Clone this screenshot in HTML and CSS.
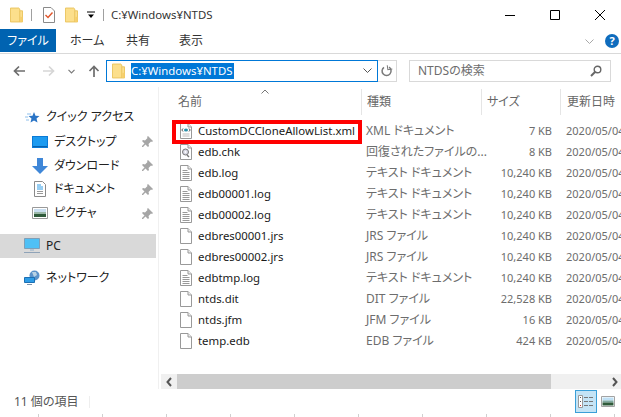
FILE: index.html
```html
<!DOCTYPE html>
<html lang="ja">
<head>
<meta charset="utf-8">
<title>NTDS</title>
<link rel="stylesheet" href="styles.css">
</head>
<body>
<svg class="defs" width="0" height="0">
  <symbol id="folder" viewBox="0 0 14 16"><path d="M.5.500h9l1 1v2h3v12H.5z" fill="#fcdf8c" stroke="#e9c35b"/><path d="M10.500 3.500v12" stroke="#e9c35b"/><path d="M11 10h2.500v5.500H11z" fill="#f6cf6c"/></symbol>
  <symbol id="doc" viewBox="0 0 12 16"><path d="M.5.500h7.500l3.500 3.500v11.500H.5z" fill="#fff" stroke="#999"/><path d="M8 .5v3.500h3.500" fill="#eee" stroke="#999"/></symbol>
  <symbol id="log" viewBox="0 0 12 16"><path d="M.5.500h7.500l3.500 3.500v11.500H.5z" fill="#fff" stroke="#999"/><path d="M8 .5v3.500h3.500" fill="#eee" stroke="#999"/><path d="M2.500 5.500h5M2.500 7.500h7M2.500 9.500h7M2.500 11.500h7M2.500 13.500h7" stroke="#999"/></symbol>
  <symbol id="xml" viewBox="0 0 12 16"><path d="M.5.500h7.500l3.500 3.500v11.500H.5z" fill="#fff" stroke="#999"/><path d="M8 .5v3.500h3.500" fill="#eee" stroke="#999"/><ellipse cx="6" cy="7" rx="2" ry="1.500" fill="#2a8fa8"/><path d="M3 5.500 1.800 7 3 8.500M9 5.500 10.200 7 9 8.500" fill="none" stroke="#555"/><path d="M2.500 11h7M2.500 13h7" stroke="#bbb"/></symbol>
  <symbol id="chk" viewBox="0 0 12 16"><path d="M.5.500h7.500l3.500 3.500v11.500H.5z" fill="#fff" stroke="#999"/><path d="M8 .5v3.500h3.500" fill="#eee" stroke="#999"/><circle cx="5.500" cy="8" r="3" fill="#d8d8e4" stroke="#777"/><circle cx="5.500" cy="8" r="1" fill="#fff"/><path d="m7 11 2 2" stroke="#777" stroke-width="1.500"/></symbol>
  <symbol id="pin" viewBox="0 0 11 11"><path d="m6 0 5 5-1 1-1-.5-2.500 2.500.5 2-1 1-2.500-2.500L1 11l-1 0 0-1 2.500-2.500L0 5l1-1 2 .5L5.500 2 5 1z" fill="#a6a6a6"/></symbol>
</svg>

<header class="titlebar">
  <svg class="ti ti-folder"><use href="#folder"/></svg>
  <span class="vsep"></span>
  <svg class="ti-props" viewBox="0 0 12 16"><path d="M.5.500h7.500l3.500 3.500v11.500H.5z" fill="#fff" stroke="#8a8a8a"/><path d="m2.500 8 2.500 2.500 4.500-5" fill="none" stroke="#e0552b" stroke-width="1.400"/></svg>
  <svg class="ti ti-folder2"><use href="#folder"/></svg>
  <svg class="ti-down" viewBox="0 0 8 8"><path d="M0 1h8" stroke="#000"/><path d="M1 3.500h6L4 7z" fill="#000"/></svg>
  <span class="vsep vsep2"></span>
  <span class="title latin">C:¥Windows¥NTDS</span>
  <div class="winctl">
    <svg viewBox="0 0 10 10"><path d="M0 5.500h10" stroke="#000"/></svg>
    <svg viewBox="0 0 10 10"><path d="M.5.500h9v9h-9z" fill="none" stroke="#000"/></svg>
    <svg viewBox="0 0 10 10"><path d="m0 0 10 10M10 0 0 10" stroke="#000"/></svg>
  </div>
</header>

<nav class="tabs">
  <span class="tab tab-file">ファイル</span>
  <span class="tab tab-home">ホーム</span>
  <span class="tab tab-share">共有</span>
  <span class="tab tab-view">表示</span>
  <svg class="ribbon-chev" viewBox="0 0 9 6"><path d="m.5.500 4 4 4-4" fill="none" stroke="#a8a8a8"/></svg>
  <span class="help">?</span>
</nav>

<div class="addressrow">
  <div class="navbtns">
    <svg class="nb nb-back" viewBox="0 0 12 12"><path d="M12 6H2M6 1.500 1.500 6 6 10.500" fill="none" stroke="#6d6d6d" stroke-width="1.700"/></svg>
    <svg class="nb nb-fwd" viewBox="0 0 12 12"><path d="M0 6h10M6 1.500 10.500 6 6 10.500" fill="none" stroke="#d6d6d6" stroke-width="1.700"/></svg>
    <svg class="nb-drop" viewBox="0 0 7 5"><path d="m.5.800 3 3 3-3" fill="none" stroke="#7a7a7a" stroke-width="1.200"/></svg>
    <svg class="nb nb-up" viewBox="0 0 12 12"><path d="M6 12V2M1.500 6 6 1.500 10.500 6" fill="none" stroke="#6d6d6d" stroke-width="1.700"/></svg>
  </div>
  <div class="address">
    <svg class="addr-folder"><use href="#folder"/></svg>
    <span class="addr-text"><span class="selected latin">C:¥Windows¥NTDS</span></span>
    <svg class="addr-drop" viewBox="0 0 9 6"><path d="m.5.500 4 4 4-4" fill="none" stroke="#555"/></svg>
  </div>
  <div class="refresh">
    <svg viewBox="0 0 12 12"><path d="M8 2.200A4.500 4.500 0 1 1 3 2.300" fill="none" stroke="#7a7a7a" stroke-width="1.500"/><path d="M6.500 0v4.500H11" fill="none" stroke="#7a7a7a" stroke-width="1" transform="rotate(-8 8 2)"/></svg>
  </div>
  <div class="search">
    <span class="search-text">NTDSの検索</span>
    <svg viewBox="0 0 12 12"><circle cx="7.500" cy="4.500" r="3.300" fill="none" stroke="#666" stroke-width="1.400"/><path d="M5 7 1 11" stroke="#666" stroke-width="2"/></svg>
  </div>
</div>

<main class="body">
  <aside class="sidebar">
    <div class="nav-item nav-quick">
      <svg class="nav-ic" viewBox="0 0 16 16"><path d="m10 3 1.500 3.700 4 .3-3 2.600 1 3.900-3.500-2.100-3.500 2.100 1-3.900-3-2.600 4-.3z" fill="#2a74c6"/><path d="M3 5h4M1 8h3M2 11h3" stroke="#8fc0ec"/></svg>
      <span>クイック アクセス</span>
    </div>
    <div class="nav-item nav-sub">
      <svg class="nav-ic" viewBox="0 0 16 12"><path d="M0 0h16v12H0z" fill="#0a7ad6"/><path d="M1 1h14v9H1z" fill="#1d9bf0"/><path d="M1 10h14v1H1z" fill="#0a62ad"/></svg>
      <span>デスクトップ</span><svg class="pin"><use href="#pin"/></svg>
    </div>
    <div class="nav-item nav-sub">
      <svg class="nav-ic" viewBox="0 0 16 16"><path d="M5 0h6v8h5l-8 8-8-8h5z" fill="#3f87d8"/></svg>
      <span>ダウンロード</span><svg class="pin"><use href="#pin"/></svg>
    </div>
    <div class="nav-item nav-sub">
      <svg class="nav-ic" viewBox="0 0 16 16"><path d="M2.500.500h8l3 3v12h-11z" fill="#fff" stroke="#8a8a8a"/><path d="M5 4h4M5 6h6M5 8h6" stroke="#2e9ce6"/><path d="M5 10.500h6M5 12.500h6" stroke="#999"/></svg>
      <span>ドキュメント</span><svg class="pin"><use href="#pin"/></svg>
    </div>
    <div class="nav-item nav-sub">
      <svg class="nav-ic" viewBox="0 0 16 12"><path d="M.5.500h15v11H.5z" fill="#fff" stroke="#999"/><path d="M2 2h12v3H2z" fill="#c9def0"/><path d="M2 5h12v2H2z" fill="#9bb8a8"/><path d="M2 7h12v3H2z" fill="#2f5a3a"/></svg>
      <span>ピクチャ</span><svg class="pin"><use href="#pin"/></svg>
    </div>
    <div class="nav-item nav-pc">
      <svg class="nav-ic" viewBox="0 0 16 16"><path d="M.5.500h15v10H.5z" fill="#4fc0f5" stroke="#7e9fb8"/><path d="M6 11h4v2H6z" fill="#b5c4d2"/><path d="M0 14h16v1H0z" fill="#8fa3b8"/></svg>
      <span>PC</span>
    </div>
    <div class="nav-item nav-network">
      <svg class="nav-ic" viewBox="0 0 16 16"><circle cx="10.500" cy="5.500" r="5" fill="#5c92c9"/><path d="M8 2h4l1 3-3 2z" fill="#b9d2e4"/><path d="M.5 7.500h10v5H.5z" fill="#2e9ce6" stroke="#1c6fb3"/><path d="M3 14h5v1H3z" fill="#7e93ab"/></svg>
      <span>ネットワーク</span>
    </div>
  </aside>

  <section class="content">
    <div class="list">
      <div class="sort-caret"><svg viewBox="0 0 8 5"><path d="m.5 4.500 3.500-3.500 3.500 3.500" fill="none" stroke="#777"/></svg></div>
      <div class="row head">
        <span class="c-name">名前</span><span class="c-type">種類</span><span class="c-size">サイズ</span><span class="c-date">更新日時</span>
      </div>
      <div class="row"><svg class="fi"><use href="#xml"/></svg><span class="c-name">CustomDCCloneAllowList.xml</span><span class="c-type">XML ドキュメント</span><span class="c-size">7 KB</span><span class="c-date">2020/05/04</span></div>
      <div class="row"><svg class="fi"><use href="#chk"/></svg><span class="c-name">edb.chk</span><span class="c-type">回復されたファイルの...</span><span class="c-size">8 KB</span><span class="c-date">2020/05/04</span></div>
      <div class="row"><svg class="fi"><use href="#log"/></svg><span class="c-name">edb.log</span><span class="c-type">テキスト ドキュメント</span><span class="c-size">10,240 KB</span><span class="c-date">2020/05/04</span></div>
      <div class="row"><svg class="fi"><use href="#log"/></svg><span class="c-name">edb00001.log</span><span class="c-type">テキスト ドキュメント</span><span class="c-size">10,240 KB</span><span class="c-date">2020/05/04</span></div>
      <div class="row"><svg class="fi"><use href="#log"/></svg><span class="c-name">edb00002.log</span><span class="c-type">テキスト ドキュメント</span><span class="c-size">10,240 KB</span><span class="c-date">2020/05/04</span></div>
      <div class="row"><svg class="fi"><use href="#doc"/></svg><span class="c-name">edbres00001.jrs</span><span class="c-type">JRS ファイル</span><span class="c-size">10,240 KB</span><span class="c-date">2020/05/04</span></div>
      <div class="row"><svg class="fi"><use href="#doc"/></svg><span class="c-name">edbres00002.jrs</span><span class="c-type">JRS ファイル</span><span class="c-size">10,240 KB</span><span class="c-date">2020/05/04</span></div>
      <div class="row"><svg class="fi"><use href="#log"/></svg><span class="c-name">edbtmp.log</span><span class="c-type">テキスト ドキュメント</span><span class="c-size">10,240 KB</span><span class="c-date">2020/05/04</span></div>
      <div class="row"><svg class="fi"><use href="#doc"/></svg><span class="c-name">ntds.dit</span><span class="c-type">DIT ファイル</span><span class="c-size">22,528 KB</span><span class="c-date">2020/05/04</span></div>
      <div class="row"><svg class="fi"><use href="#doc"/></svg><span class="c-name">ntds.jfm</span><span class="c-type">JFM ファイル</span><span class="c-size">16 KB</span><span class="c-date">2020/05/04</span></div>
      <div class="row"><svg class="fi"><use href="#doc"/></svg><span class="c-name">temp.edb</span><span class="c-type">EDB ファイル</span><span class="c-size">424 KB</span><span class="c-date">2020/05/04</span></div>
      <div class="callout"></div>
    </div>
    <div class="hscroll">
      <svg class="sb-arrow" viewBox="0 0 6 10"><path d="M5 1 1.500 5 5 9" fill="none" stroke="#555" stroke-width="2"/></svg>
      <div class="sb-track"><div class="sb-thumb"></div></div>
      <svg class="sb-arrow" viewBox="0 0 6 10"><path d="M1 1l3.500 4L1 9" fill="none" stroke="#555" stroke-width="2"/></svg>
    </div>
  </section>
</main>

<footer class="status">
  <span class="count">11 個の項目</span>
  <div class="views">
    <span class="view-btn active"><svg viewBox="0 0 16 13"><path d="M.5.500h4v12h-4z" fill="#fff" stroke="#9a9a9a"/><path d="M2 2h1v1H2zM2 6h1v1H2z" fill="#555"/><path d="M2 10h1v1H2z" fill="#c33"/><path d="M6 2.500h4M11 2.500h4M6 6.500h4M11 6.500h4M6 10.500h4M11 10.500h4" stroke="#777"/></svg></span>
    <span class="view-btn"><svg viewBox="0 0 14 11"><path d="M.5.500h13v10H.5z" fill="#fff" stroke="#a3a3a3"/><path d="M1.500 1.500h11v3h-11z" fill="#bfe0f5"/><path d="M1.500 4.500h11v2h-11z" fill="#7fa9a0"/><path d="M1.500 6.500h11v3h-11z" fill="#2f5a3a"/></svg></span>
  </div>
</footer>
<div class="ruler">
  <i></i><i></i><i></i><i></i><i></i><i></i><i></i><i></i><i></i><i></i>
</div>
</body>
</html>
```
FILE: styles.css
```css
* { box-sizing: border-box; }
html, body { margin: 0; padding: 0; }
body {
  width: 621px;
  height: 417px;
  overflow: hidden;
  background: #fff;
  color: #1a1a1a;
  font: 12px/16px "Noto Sans", "Noto Sans CJK JP", sans-serif;
  font-feature-settings: "palt";
  display: flex;
  flex-direction: column;
}
.defs { position: absolute; }
.latin { font-size: 11.4px; }

.titlebar { height: 29px; display: flex; align-items: center; padding-left: 10px; flex: none; }
.ti { width: 13px; height: 16px; flex: none; }
.ti-folder2 { margin-left: 10px; }
.vsep { width: 1px; height: 12px; background: #a0a0a0; margin-left: 8px; }
.vsep2 { margin-left: 8px; }
.ti-props { width: 12px; height: 16px; margin-left: 11px; }
.ti-down { width: 8px; height: 8px; margin-left: 9px; }
.title { margin-left: 7px; color: #333; }
.winctl { margin-left: auto; display: flex; gap: 35px; padding-right: 16px; }
.winctl svg { width: 10px; height: 10px; display: block; }

.tabs { height: 25px; flex: none; display: flex; align-items: flex-start; border-bottom: 1px solid #d9d9d9; gap: 0; }
.tab { height: 23px; line-height: 23px; color: #333; }
.tab-file { width: 56px; background: #0063b1; color: #fff; text-align: center; }
.tab-home { margin-left: 14px; width: 56px; }
.tab-share { width: 53px; }
.tab-view { width: 30px; }
.ribbon-chev { width: 9px; height: 6px; margin-left: auto; margin-top: 10px; }
.help { width: 14px; height: 14px; border-radius: 50%; background: #0f6cbd; color: #fff; font-weight: 700; font-size: 11px; line-height: 14px; text-align: center; margin: 5px 2px 0 11px; }

.addressrow { height: 33px; flex: none; display: flex; align-items: center; padding-top: 1px; }
.navbtns { width: 106px; display: flex; align-items: center; padding-left: 13px; }
.nb { width: 12px; height: 12px; }
.nb-fwd { margin-left: 18px; }
.nb-drop { width: 7px; height: 5px; margin-left: 13px; }
.nb-up { margin-left: 13px; }
.address { width: 272px; height: 22px; border: 1px solid #0078d7; display: flex; align-items: center; padding-left: 5px; }
.addr-folder { width: 13px; height: 16px; flex: none; }
.addr-text { margin-left: 6px; flex: 1; }
.selected { background: #0078d7; color: #fff; display: inline-block; line-height: 16px; padding-right: 1px; vertical-align: top; }
.addr-drop { width: 9px; height: 6px; margin-right: 5px; }
.refresh { width: 19px; height: 22px; border: 1px solid #d9d9d9; border-left: 0; display: flex; align-items: center; justify-content: center; }
.refresh svg { width: 12px; height: 12px; }
.search { width: 202px; height: 22px; margin-left: 12px; border: 1px solid #d9d9d9; display: flex; align-items: center; justify-content: space-between; padding: 0 8px; }
.search-text { color: #6d6d6d; }
.search svg { width: 12px; height: 12px; }

.body { height: 302px; flex: none; margin-bottom: 1px; display: flex; }
.sidebar { width: 159px; flex: none; border-right: 1px solid #f0f0f0; padding-top: 18px; }
.nav-item { height: 23.750px; display: flex; align-items: center; color: #222; width: 156px; }
.nav-ic { width: 16px; height: 16px; flex: none; margin-right: 6px; }
.nav-quick { padding-left: 24px; margin-bottom: 1px; height: 24px; }
.nav-sub { padding-left: 32px; }
.nav-pc { padding-left: 24px; margin-top: 9px; background: #d9d9d9; height: 24px; }
.nav-network { padding-left: 24px; margin-top: 8px; }
.pin { width: 11px; height: 11px; margin-left: auto; margin-right: 3px; }

.content { flex: 1; display: flex; flex-direction: column; min-width: 0; }
.list { flex: 1; position: relative; padding-top: 2px; overflow: hidden; }
.row { display: flex; align-items: center; height: 21px; padding-left: 21px; white-space: nowrap; }
.row span { flex: none; }
.head { height: 31px; padding-left: 19px; align-items: flex-start; }
.head span { height: 26px; line-height: 26px; color: #666; }
.head .c-name { width: 183px; }
.head .c-type { width: 120px; padding-left: 5px; border-left: 1px solid #e5e5e5; }
.head .c-size { width: 79px; padding-left: 5px; text-align: left; border-left: 1px solid #e5e5e5; font-size: 12px; }
.head .c-date { padding-left: 6px; border-left: 1px solid #e5e5e5; width: 61px; margin-left: 0; font-size: 12px; }
.fi { width: 12px; height: 16px; flex: none; margin-right: 6px; }
.row > svg + .c-name { width: 168px; font-size: 11.4px; color: #1a1a1a; }
.c-type { width: 118px; color: #6d6d6d; }
.c-size { width: 68px; color: #6d6d6d; text-align: right; font-size: 11px; }
.c-date { color: #6d6d6d; margin-left: 14px; font-size: 11px; }
.sort-caret { position: absolute; left: 102px; top: 2px; line-height: 0; }
.sort-caret svg { width: 8px; height: 5px; }
.callout { position: absolute; left: 13px; top: 33px; width: 190px; height: 24px; border: 4px solid #f00; }

.hscroll { height: 15px; margin-left: 2px; flex: none; background: #f0f0f0; display: flex; align-items: center; }
.sb-arrow { width: 6px; height: 10px; flex: none; margin: 0 5px; }
.sb-arrow:last-child { margin: 0 3px 0 7px; }
.sb-track { flex: 1; height: 15px; }
.sb-thumb { width: 374px; height: 15px; background: #cdcdcd; }

.status { height: 23px; flex: none; display: flex; align-items: center; padding-left: 14px; }
.count { color: #555; padding-right: 11px; border-right: 1px solid #eee; height: 12px; line-height: 12px; }
.views { margin-left: auto; display: flex; align-items: center; padding-right: 2px; }
.view-btn { width: 22px; height: 23px; display: flex; align-items: center; justify-content: center; border: 1px solid transparent; }
.view-btn svg { width: 14px; height: 11px; }
.view-btn.active { background: #c4e4f6; border-color: #3a9fd8; }
.view-btn.active svg { width: 16px; height: 13px; }

.ruler { height: 5px; flex: none; display: flex; padding-left: 38px; gap: 63px; overflow: hidden; align-items: flex-end; }
.ruler i { width: 1px; height: 4px; flex: none; background: #d0d0d0; }
```
